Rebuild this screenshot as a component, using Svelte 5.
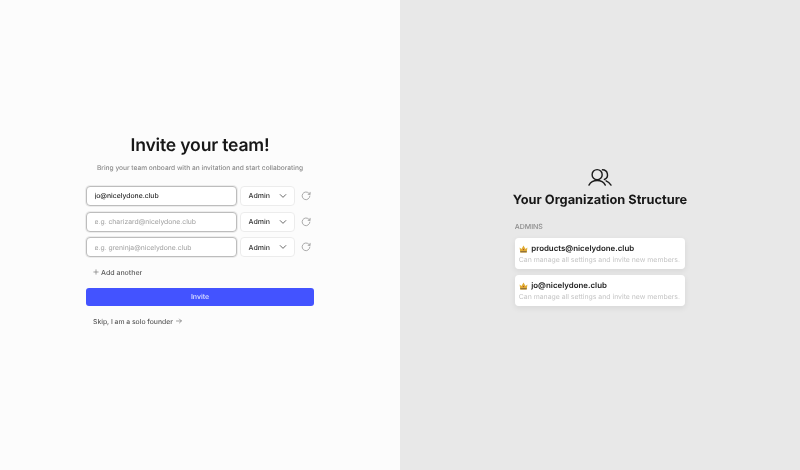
<script>
	const rows = [
		{ value: 'jo@nicelydone.club', placeholder: '' },
		{ value: '', placeholder: 'e.g. charizard@nicelydone.club' },
		{ value: '', placeholder: 'e.g. greninja@nicelydone.club' }
	];
	const admins = ['products@nicelydone.club', 'jo@nicelydone.club'];
</script>

<main class="page">
	<section class="left">
		<div class="form">
			<h1>Invite your team!</h1>
			<p class="sub">Bring your team onboard with an invitation and start collaborating</p>
			<div class="rows">
				{#each rows as row}
					<div class="row">
						<input class="email" value={row.value} placeholder={row.placeholder} />
						<div class="select">
							<span>Admin</span>
							<svg width="8" height="8" viewBox="0 0 10 10" fill="none" stroke="#555" stroke-width="1.1" stroke-linecap="round" stroke-linejoin="round"><path d="M1.5 3.2 5 6.7 8.5 3.2" /></svg>
						</div>
						<svg class="reset" width="10" height="10" viewBox="0 0 12 12" fill="none" stroke="#999" stroke-width="1" stroke-linecap="round" stroke-linejoin="round"><path d="M10.6 6.2A4.6 4.6 0 1 1 9.4 2.7L10.8 3.9" /><path d="M10.9 1.6V4H8.6" /></svg>
					</div>
				{/each}
			</div>
			<button class="add">
				<svg width="6" height="6" viewBox="0 0 7 7" stroke="#777" stroke-width="0.8" fill="none"><path d="M3.5 0.5V6.5M0.5 3.5H6.5" /></svg>
				Add another
			</button>
			<button class="invite">Invite</button>
			<button class="skip">
				Skip, I am a solo founder
				<svg width="6" height="6" viewBox="0 0 7 7" stroke="#777" stroke-width="0.8" fill="none" stroke-linecap="round" stroke-linejoin="round"><path d="M0.5 3.5H6.3M4 1.2 6.3 3.5 4 5.8" /></svg>
			</button>
		</div>
	</section>
	<section class="right">
		<div class="org">
			<svg class="people" width="26" height="19" viewBox="0 0 26 20" fill="none" stroke="#1c1c1c" stroke-width="1.5" stroke-linecap="round" stroke-linejoin="round">
				<circle cx="10" cy="7" r="5.3" />
				<path d="M1.4 18C3 15 6 13.2 10 13.2S17 15 18.6 18" />
				<path d="M15.6 1.9A5.3 5.3 0 0 1 17.6 12.1" />
				<path d="M19.4 13.5C21.4 14.4 23.2 16 24.6 18" />
			</svg>
			<h2>Your Organization Structure</h2>
			<div class="label">ADMINS</div>
			{#each admins as email}
				<div class="card">
					<div class="name">
						<svg width="9" height="8" viewBox="0 0 9 8"><path d="M0.6 2.4 2.5 4 4.5 0.6 6.5 4 8.4 2.4 7.7 7.4H1.3Z" fill="#e0ad35" /><rect x="1.3" y="6" width="6.4" height="1.4" fill="#94743a" /><circle cx="4.5" cy="4.6" r="0.7" fill="#b3452f" /></svg>
						<span>{email}</span>
					</div>
					<div class="desc">Can manage all settings and invite new members.</div>
				</div>
			{/each}
		</div>
	</section>
</main>

<style>
	:global(body) {
		margin: 0;
	}
	.page {
		display: flex;
		width: 800px;
		height: 470px;
		font-family: Inter, 'Liberation Sans', sans-serif;
		text-rendering: geometricPrecision;
		overflow: hidden;
	}
	.left {
		width: 400px;
		background: #fcfcfc;
		display: flex;
		align-items: center;
		justify-content: center;
	}
	.form {
		width: 228px;
		display: flex;
		flex-direction: column;
		padding-bottom: 10px;
		will-change: opacity;
	}
	h1 {
		margin: 1px 0 0;
		font-size: 17.6px;
		line-height: 24px;
		font-weight: 600;
		color: #171717;
		text-align: center;
		letter-spacing: -0.2px;
	}
	.sub {
		margin: 4px -20px 0;
		font-size: 6.6px;
		line-height: 12px;
		color: #8a8a8a;
		font-weight: 500;
		text-align: center;
	}
	.rows {
		display: flex;
		flex-direction: column;
		gap: 5.7px;
		margin-top: 12px;
	}
	.row {
		display: flex;
		align-items: center;
		height: 20px;
	}
	.email {
		width: 151.3px;
		height: 20px;
		box-sizing: border-box;
		border: 1px solid #bdbdbd;
		border-radius: 4px;
		background: #fff;
		padding: 0 7.5px;
		font: 500 6.8px Inter, sans-serif;
		text-rendering: geometricPrecision;
		color: #2a2a2a;
		outline: none;
		box-shadow: 0 0 0 1px #ececec;
	}
	.email::placeholder {
		color: #a0a0a0;
		font-weight: 400;
	}
	.select {
		width: 55px;
		height: 20px;
		box-sizing: border-box;
		margin-left: 2.3px;
		padding: 0 6.5px 0 8px;
		border: 1px solid #ececec;
		border-radius: 4px;
		background: rgba(255, 255, 255, 0.99);
		display: flex;
		align-items: center;
		justify-content: space-between;
		font-size: 7px;
		font-weight: 500;
		color: #333;
	}
	.reset {
		margin-left: 6.5px;
	}
	button {
		font-family: inherit;
		text-rendering: geometricPrecision;
		border: none;
		background: none;
		padding: 0;
		cursor: pointer;
	}
	.add {
		display: flex;
		align-items: center;
		gap: 2px;
		margin: 9px 0 0 7px;
		height: 12px;
		font-size: 7px;
		font-weight: 500;
		color: #5c5c5c;
	}
	.invite {
		margin-top: 10px;
		height: 17.5px;
		border-radius: 3px;
		background: #4353ff;
		color: #dfe2ff;
		font-size: 7px;
		font-weight: 500;
	}
	.skip {
		display: flex;
		align-items: center;
		gap: 3px;
		margin: 9.5px 0 0 7px;
		height: 12px;
		font-size: 6.8px;
		font-weight: 500;
		color: #5c5c5c;
	}
	.right {
		width: 400px;
		background: #e8e8e8;
		display: flex;
		align-items: center;
		justify-content: center;
	}
	.org {
		width: 170.5px;
		display: flex;
		flex-direction: column;
		padding-top: 4px;
		will-change: opacity;
	}
	.people {
		align-self: center;
	}
	h2 {
		margin: 5px -10px 0;
		font-size: 12.8px;
		line-height: 18px;
		font-weight: 700;
		color: #171717;
		text-align: center;
		white-space: nowrap;
	}
	.label {
		margin-top: 12px;
		font-size: 7px;
		line-height: 10px;
		font-weight: 500;
		color: #8a8a8a;
	}
	.card {
		margin-top: 6px;
		height: 31px;
		box-sizing: border-box;
		padding: 5px 4px;
		background: rgba(255, 255, 255, 0.99);
		border-radius: 4px;
		box-shadow: 0 2px 6px rgba(0, 0, 0, 0.08);
	}
	.name {
		display: flex;
		align-items: center;
		gap: 3.5px;
		font-size: 7.9px;
		line-height: 11px;
		font-weight: 600;
		color: #222;
	}
	.desc {
		margin-top: 1px;
		font-size: 6.9px;
		line-height: 10px;
		color: #c4c4c4;
		white-space: nowrap;
	}
</style>
